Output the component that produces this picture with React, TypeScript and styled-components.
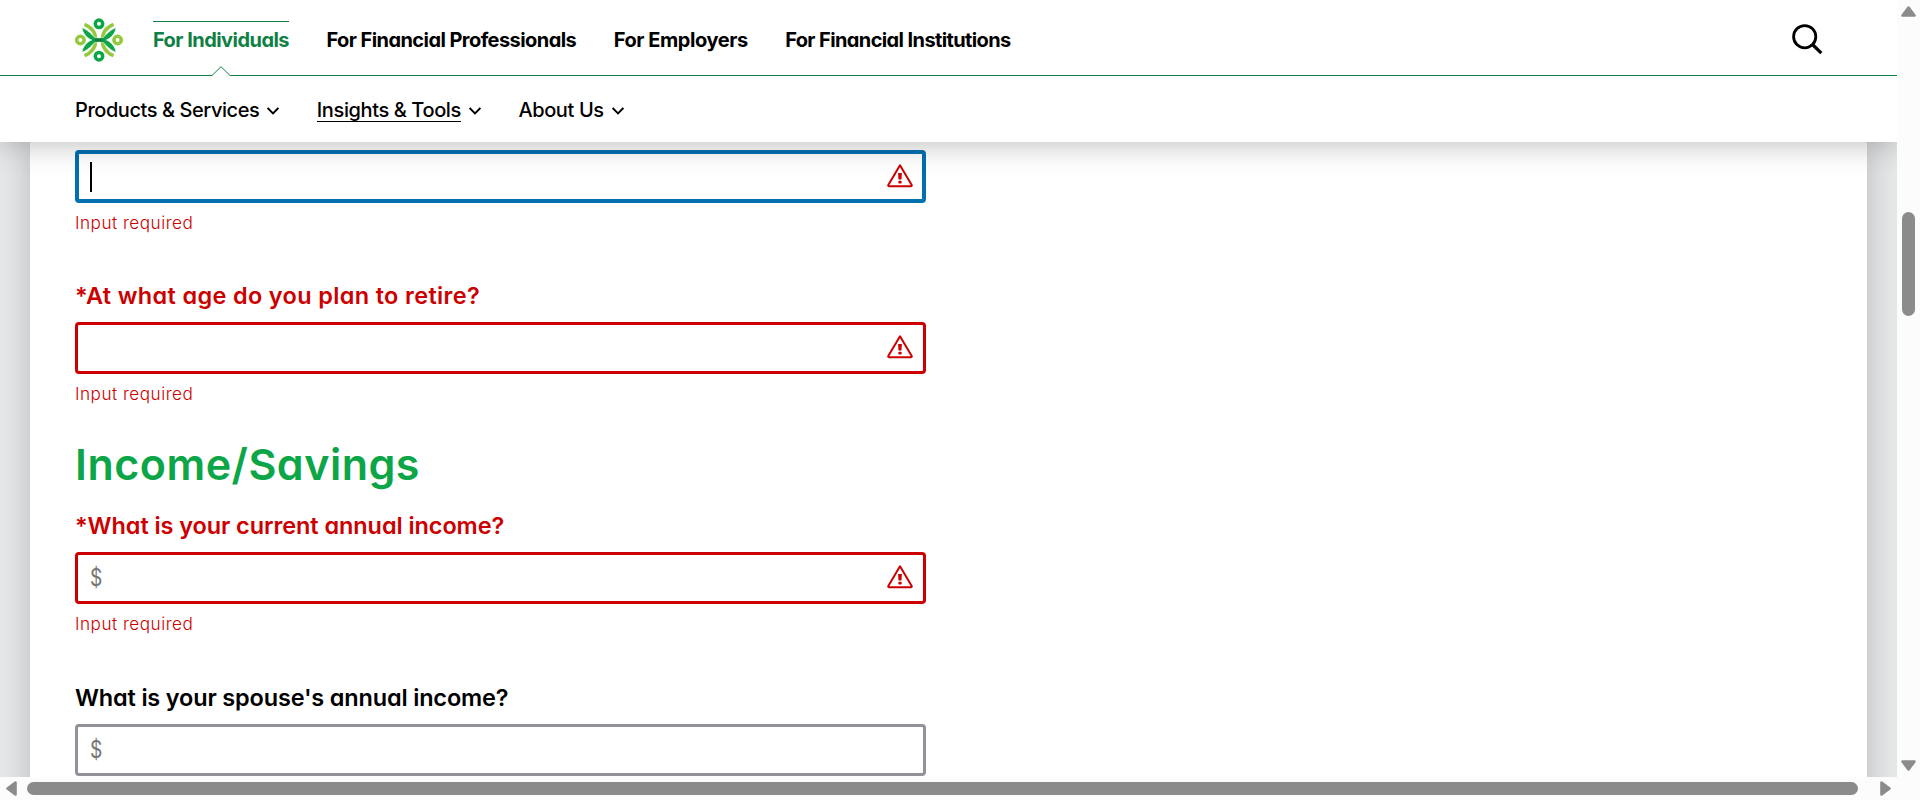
import React from 'react';
import styled, { createGlobalStyle } from 'styled-components';

const GREEN = '#0f8044';
const BRAND = '#0ca547';
const LIME = '#95c93d';
const RED = '#cc0000';
const BLUE = '#0070b1';

const GlobalStyle = createGlobalStyle`
  * { box-sizing: border-box; }
  body {
    margin: 0;
    overflow: hidden;
    background: #fcfcfc;
    font-family: Inter, "Liberation Sans", sans-serif;
    font-feature-settings: "cv11";
  }
`;

const Window = styled.div`
  display: grid;
  grid-template-columns: 1fr 23px;
  grid-template-rows: 777px 23px;
  width: 1920px;
  height: 800px;
`;

const Viewport = styled.div`
  display: flex;
  flex-direction: column;
  min-width: 0;
  overflow: hidden;
  background: #e5e7e9;
`;

const Header = styled.header`
  position: relative;
  z-index: 1;
  flex: none;
  height: 142px;
  background: #fff;
  box-shadow: 0 0 30px rgba(0, 0, 0, 0.3);
`;

const PrimaryBar = styled.div`
  display: flex;
  align-items: center;
  height: 76px;
  padding: 0 75px;
  border-bottom: 1px solid ${GREEN};
`;

const PrimaryNav = styled.nav`
  display: flex;
  flex: 1;
  gap: 37.5px;
  margin: 1px 0 0 30px;
`;

const PrimaryLink = styled.a<{ $spacing: number; $active?: boolean }>`
  position: relative;
  padding-top: 3px;
  border-top: 1px solid ${p => (p.$active ? GREEN : 'transparent')};
  color: ${p => (p.$active ? GREEN : '#000')};
  font-size: 20px;
  font-weight: 700;
  line-height: 30px;
  letter-spacing: ${p => p.$spacing}px;
  white-space: nowrap;
`;

const Notch = styled.svg`
  position: absolute;
  top: 44px;
  left: 50%;
  margin-left: -10px;
`;

const SecondaryBar = styled.nav`
  display: flex;
  align-items: center;
  gap: 37.5px;
  height: 66px;
  padding: 3px 75px 0;
`;

const MenuItem = styled.div`
  display: flex;
  align-items: center;
  gap: 8px;
`;

const MenuLabel = styled.span<{ $spacing: number; $current?: boolean }>`
  border-bottom: 1px solid ${p => (p.$current ? '#000' : 'transparent')};
  font-size: 20px;
  font-weight: 500;
  line-height: 22px;
  letter-spacing: ${p => p.$spacing}px;
  white-space: nowrap;
`;

const Page = styled.main`
  flex: none;
  width: 1837px;
  height: 900px;
  margin: 0 30px;
  padding: 8px 45px 0;
  background: #fff;
  box-shadow: 0 0 30px rgba(0, 0, 0, 0.2);
`;

const Field = styled.div<{ $height: number }>`
  display: flex;
  flex-direction: column;
  width: 851px;
  height: ${p => p.$height}px;
`;

const Label = styled.label<{ $spacing: number; $error?: boolean }>`
  height: 44px;
  color: ${p => (p.$error ? RED : '#000')};
  font-size: 23.5px;
  font-weight: 600;
  line-height: 36px;
  letter-spacing: ${p => p.$spacing}px;
  white-space: nowrap;
`;

const stateColor = { focus: BLUE, error: RED, idle: '#929197' };

const InputBox = styled.div<{ $state: keyof typeof stateColor }>`
  display: flex;
  align-items: center;
  height: ${p => (p.$state === 'focus' ? 53 : 52)}px;
  padding: 0 ${p => (p.$state === 'focus' ? 9 : 10)}px 0 ${p => (p.$state === 'focus' ? 11 : 12)}px;
  border: ${p => (p.$state === 'focus' ? 4 : 3)}px solid ${p => stateColor[p.$state]};
  border-radius: 4px;
  background: #fff;
`;

const Caret = styled.span`
  width: 2px;
  height: 30px;
  background: #000;
`;

const Prefix = styled.span`
  margin-top: -1px;
  color: #757575;
  font-size: 24px;
  font-weight: 400;
  transform: scaleX(0.8);
  transform-origin: left;
`;

const Alert = styled.svg`
  margin: -2px 0 0 auto;
`;

const ErrorText = styled.p`
  margin: 8px 0 0;
  color: ${RED};
  font-size: 17.2px;
  font-weight: 300;
  line-height: 24px;
  letter-spacing: 0.48px;
`;

const SectionTitle = styled.h2`
  height: 74px;
  margin: 0;
  color: ${BRAND};
  font-size: 43px;
  font-weight: 600;
  line-height: 60px;
  letter-spacing: 0.5px;
`;

const VerticalTrack = styled.div`
  display: flex;
  flex-direction: column;
  align-items: center;
  padding: 6px 0;
`;

const VerticalThumb = styled.div`
  width: 13px;
  height: 104px;
  margin: 195px 0 auto;
  border-radius: 7px;
  background: #8b8b8b;
`;

const HorizontalTrack = styled.div`
  display: flex;
  align-items: center;
  padding: 0 6px 1px;
`;

const HorizontalThumb = styled.div`
  width: 1831px;
  height: 13px;
  margin: 0 auto 0 10px;
  border-radius: 7px;
  background: #8b8b8b;
`;

const turns = { up: 0, right: 90, down: 180, left: 270 };

function ScrollArrow({ dir }: { dir: keyof typeof turns }) {
  const sideways = dir === 'left' || dir === 'right';
  return (
    <svg width={sideways ? 11 : 15} height={sideways ? 15 : 11} viewBox={sideways ? '-5.5 -7.5 11 15' : '-7.5 -5.5 15 11'}>
      <path
        transform={`rotate(${turns[dir]})`}
        d="M0 -4 L6 4 H-6 Z"
        fill="#8b8b8b"
        stroke="#8b8b8b"
        strokeWidth="2.6"
        strokeLinejoin="round"
      />
    </svg>
  );
}

const LogoMark = styled.svg`
  flex: none;
  margin-top: 5px;
`;

function Logo() {
  return (
    <LogoMark width="48" height="44" viewBox="0 0 48 44" fill="none">
      <g stroke={LIME} strokeWidth="3.5">
        <circle cx="5.4" cy="22" r="3.7" />
        <circle cx="42.6" cy="22" r="3.7" />
        <path d="M9.5 6.3 C16 9 20.7 14 20.7 22 C20.7 30 16 35 9.5 37.7" />
        <path d="M38.5 6.3 C32 9 27.3 14 27.3 22 C27.3 30 32 35 38.5 37.7" />
      </g>
      <path
        d="M7 9.5 C13 11.5 17.5 17.5 20.5 20 H27.5 C30.5 17.5 35 11.5 41 9.5 C40.5 15.5 36 20 31.5 22 C36 24 40.5 28.5 41 34.5 C35 32.5 30.5 26.5 27.5 24 H20.5 C17.5 26.5 13 32.5 7 34.5 C7.5 28.5 12 24 16.5 22 C12 20 7.5 15.5 7 9.5 Z"
        fill={BRAND}
        stroke="#fff"
        strokeWidth="0.7"
      />
      <rect x="19.8" y="20.2" width="8.4" height="3.6" fill="#12803f" />
      <g stroke={BRAND} strokeWidth="3.5">
        <circle cx="24" cy="5.8" r="3.7" />
        <circle cx="24" cy="38.2" r="3.7" />
      </g>
    </LogoMark>
  );
}

function SearchIcon() {
  return (
    <svg width="31" height="31" viewBox="0 0 31 31" fill="none" stroke="#000" strokeWidth="2.8">
      <circle cx="12.7" cy="12.7" r="11.1" />
      <path d="M20.5 20.5 L29.3 29.1" strokeWidth="3.2" />
    </svg>
  );
}

const SearchButton = styled.span`
  display: flex;
  margin: 4px -1px 0 0;
`;

function Chevron() {
  return (
    <svg width="12" height="8" viewBox="0 0 12 8" fill="none" stroke="#000" strokeWidth="1.9">
      <path d="M0.6 0.9 L6 6.5 L11.4 0.9" />
    </svg>
  );
}

function AlertIcon() {
  return (
    <Alert width="26" height="24" viewBox="0 0 26 24" fill="none">
      <path d="M13 1.3 L24.7 21 Q25 22.3 23.8 22.3 H2.2 Q1 22.3 1.3 21 Z" stroke={RED} strokeWidth="2" strokeLinejoin="round" />
      <path d="M11.1 9 H14.9 L14.5 15.5 H11.5 Z" fill={RED} />
      <rect x="11.3" y="16.7" width="3.4" height="2.7" rx="1" fill={RED} />
    </Alert>
  );
}

const primary = [
  { text: 'For Individuals', spacing: -0.54, active: true },
  { text: 'For Financial Professionals', spacing: -0.57 },
  { text: 'For Employers', spacing: -0.43 },
  { text: 'For Financial Institutions', spacing: -0.61 },
];

const secondary = [
  { text: 'Products & Services', spacing: -0.44 },
  { text: 'Insights & Tools', spacing: -0.39, current: true },
  { text: 'About Us', spacing: -0.38 },
];

export default function App() {
  return (
    <>
      <GlobalStyle />
      <Window>
        <Viewport>
          <Header>
            <PrimaryBar>
              <Logo />
              <PrimaryNav>
                {primary.map(item => (
                  <PrimaryLink key={item.text} $spacing={item.spacing} $active={item.active}>
                    {item.text}
                    {item.active && (
                      <Notch width="20" height="10" viewBox="0 0 20 10">
                        <path d="M0.5 10 L10 0.7 L19.5 10" fill="#fff" stroke={GREEN} />
                      </Notch>
                    )}
                  </PrimaryLink>
                ))}
              </PrimaryNav>
              <SearchButton>
                <SearchIcon />
              </SearchButton>
            </PrimaryBar>
            <SecondaryBar>
              {secondary.map(item => (
                <MenuItem key={item.text}>
                  <MenuLabel $spacing={item.spacing} $current={item.current}>
                    {item.text}
                  </MenuLabel>
                  <Chevron />
                </MenuItem>
              ))}
            </SecondaryBar>
          </Header>
          <Page>
            <Field $height={128}>
              <InputBox $state="focus">
                <Caret />
                <AlertIcon />
              </InputBox>
              <ErrorText>Input required</ErrorText>
            </Field>
            <Field $height={156}>
              <Label $error $spacing={0.34}>*At what age do you plan to retire?</Label>
              <InputBox $state="error">
                <AlertIcon />
              </InputBox>
              <ErrorText>Input required</ErrorText>
            </Field>
            <SectionTitle>Income/Savings</SectionTitle>
            <Field $height={172}>
              <Label $error $spacing={-0.08}>*What is your current annual income?</Label>
              <InputBox $state="error">
                <Prefix>$</Prefix>
                <AlertIcon />
              </InputBox>
              <ErrorText>Input required</ErrorText>
            </Field>
            <Field $height={100}>
              <Label $spacing={-0.17}>What is your spouse's annual income?</Label>
              <InputBox $state="idle">
                <Prefix>$</Prefix>
              </InputBox>
            </Field>
          </Page>
        </Viewport>
        <VerticalTrack>
          <ScrollArrow dir="up" />
          <VerticalThumb />
          <ScrollArrow dir="down" />
        </VerticalTrack>
        <HorizontalTrack>
          <ScrollArrow dir="left" />
          <HorizontalThumb />
          <ScrollArrow dir="right" />
        </HorizontalTrack>
      </Window>
    </>
  );
}
